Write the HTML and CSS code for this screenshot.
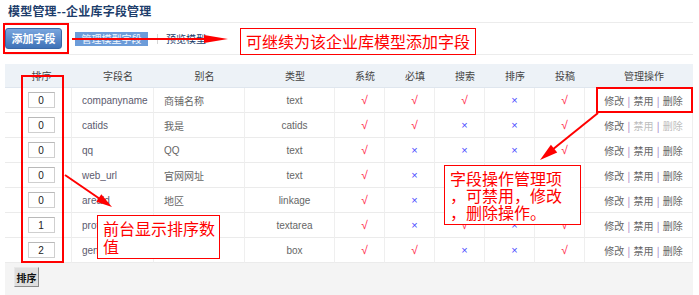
FILE: index.html
```html
<!DOCTYPE html>
<html lang="zh-CN">
<head>
<meta charset="utf-8">
<title>模型管理--企业库字段管理</title>
<link rel="stylesheet" href="styles.css">
</head>
<body>
<div class="page">
  <h1 class="title">模型管理--企业库字段管理</h1>
  <div class="tabs">
    <a class="btn-primary">添加字段</a>
    <a class="btn-tab">管理模型字段</a>
    <span class="sep"></span>
    <a class="link">预览模型</a>
  </div>
  <div class="panel">
    <table class="grid">
      <colgroup>
        <col class="c-sort"><col class="c-field"><col class="c-alias"><col class="c-type">
        <col class="c-flag"><col class="c-flag"><col class="c-flag"><col class="c-flag"><col class="c-flag">
        <col class="c-ops">
      </colgroup>
      <thead>
        <tr><th class="first">排序</th><th>字段名</th><th>别名</th><th>类型</th><th>系统</th><th>必填</th><th>搜索</th><th>排序</th><th>投稿</th><th>管理操作</th></tr>
      </thead>
      <tbody>
        <tr><td class="first"><input class="num" value="0"></td><td class="left fname">companyname</td><td class="left">商铺名称</td><td>text</td><td><span class="yes">√</span></td><td><span class="yes">√</span></td><td><span class="yes">√</span></td><td><span class="no">×</span></td><td><span class="yes">√</span></td><td class="ops">修改 <i>|</i> 禁用 <i>|</i> 删除</td></tr>
        <tr><td class="first"><input class="num" value="0"></td><td class="left fname">catids</td><td class="left">我是</td><td>catids</td><td><span class="yes">√</span></td><td><span class="yes">√</span></td><td><span class="no">×</span></td><td><span class="no">×</span></td><td><span class="yes">√</span></td><td class="ops">修改 <i>|</i> <span class="off">禁用</span> <i>|</i> <span class="off">删除</span></td></tr>
        <tr><td class="first"><input class="num" value="0"></td><td class="left fname">qq</td><td class="left">QQ</td><td>text</td><td><span class="yes">√</span></td><td><span class="no">×</span></td><td><span class="no">×</span></td><td><span class="no">×</span></td><td><span class="yes">√</span></td><td class="ops">修改 <i>|</i> 禁用 <i>|</i> 删除</td></tr>
        <tr><td class="first"><input class="num" value="0"></td><td class="left fname">web_url</td><td class="left">官网网址</td><td>text</td><td><span class="yes">√</span></td><td><span class="no">×</span></td><td><span class="no">×</span></td><td><span class="no">×</span></td><td><span class="yes">√</span></td><td class="ops">修改 <i>|</i> 禁用 <i>|</i> 删除</td></tr>
        <tr><td class="first"><input class="num" value="0"></td><td class="left fname">areaid</td><td class="left">地区</td><td>linkage</td><td><span class="yes">√</span></td><td><span class="no">×</span></td><td><span class="no">×</span></td><td><span class="no">×</span></td><td><span class="yes">√</span></td><td class="ops">修改 <i>|</i> 禁用 <i>|</i> 删除</td></tr>
        <tr><td class="first"><input class="num" value="1"></td><td class="left fname">profile</td><td class="left">公司介绍</td><td>textarea</td><td><span class="yes">√</span></td><td><span class="no">×</span></td><td><span class="yes">√</span></td><td><span class="no">×</span></td><td><span class="yes">√</span></td><td class="ops">修改 <i>|</i> 禁用 <i>|</i> 删除</td></tr>
        <tr><td class="first"><input class="num" value="2"></td><td class="left fname">genre</td><td class="left">经营模式</td><td>box</td><td><span class="yes">√</span></td><td><span class="yes">√</span></td><td><span class="no">×</span></td><td><span class="no">×</span></td><td><span class="yes">√</span></td><td class="ops">修改 <i>|</i> 禁用 <i>|</i> 删除</td></tr>
      </tbody>
    </table>
    <div class="footer"><button class="btn-sort">排序</button></div>
  </div>
</div>

<div class="mark box-btn"></div>
<div class="mark box-col"></div>
<div class="mark box-ops"></div>
<div class="note note-add">可继续为该企业库模型添加字段</div>
<div class="note note-sort">前台显示排序数<br>值</div>
<div class="note note-ops">字段操作管理项<br>，可禁用，修改<br>，删除操作。</div>

<svg class="arrows" width="699" height="295" viewBox="0 0 699 295">
  <line x1="72" y1="39" x2="210" y2="39" stroke="#ff0000" stroke-width="2"/>
  <polygon points="204,35 228,39 204,43" fill="#ff0000"/>
  <line x1="598" y1="113" x2="552" y2="150" stroke="#ff0000" stroke-width="2"/>
  <polygon points="540,160 557.2,152.6 550.9,144.8" fill="#ff0000"/>
  <line x1="65" y1="175" x2="100" y2="199" stroke="#ff0000" stroke-width="2"/>
  <polygon points="112,207 96.3,201.7 101.3,194.3" fill="#ff0000"/>
</svg>
</body>
</html>
```
FILE: styles.css
```css
* { box-sizing: border-box; }
html, body { margin: 0; padding: 0; background: #fff; }
body {
  position: relative;
  width: 699px;
  height: 295px;
  overflow: hidden;
  font-family: "Liberation Sans", "Noto Sans CJK SC", sans-serif;
  font-size: 10px;
  color: #666;
}
.page { padding: 0 6px 0 5px; }

.title {
  margin: 0 0 0 3px;
  height: 22px;
  line-height: 22px;
  font-family: "Noto Sans CJK SC", sans-serif;
  font-size: 12px;
  font-weight: bold;
  color: #1d3d6b;
  letter-spacing: 0.2px;
}

.tabs {
  height: 33px;
  border-top: 1px solid #ececec;
  border-bottom: 1px solid #ececec;
  display: flex;
  align-items: center;
}
.btn-primary {
  width: 57px;
  height: 21px;
  line-height: 19px;
  text-align: center;
  border: 1px solid #3a67a6;
  border-radius: 3px;
  background: linear-gradient(#79a6de, #3f72b8);
  color: #fff;
  font-family: "Noto Sans CJK SC", sans-serif;
  font-size: 11px;
  font-weight: bold;
}
.btn-tab {
  margin-left: 13px;
  width: 73px;
  height: 14px;
  line-height: 14px;
  text-align: center;
  background: #6c9cd9;
  color: #f4f8fe;
  font-family: "Noto Sans CJK SC", sans-serif;
  font-size: 10px;
}
.sep {
  margin-left: 9px;
  width: 1px;
  height: 10px;
  background: #d6d6d6;
}
.link {
  margin-left: 8px;
  color: #1d3d6b;
  font-family: "Noto Sans CJK SC", sans-serif;
  font-size: 10px;
}

.panel {
  margin-top: 9px;
  width: 688px;
  background: #f4f4f4;
}
.grid {
  width: 688px;
  table-layout: fixed;
  border-collapse: separate;
  border-spacing: 0;
}
.c-sort { width: 67px; }
.c-field { width: 82px; }
.c-alias { width: 91px; }
.c-type { width: 90px; }
.c-flag { width: 50px; }
.c-ops { width: 108px; }

.grid th {
  height: 24px;
  padding: 0 0 0 10px;
  background: #edf2f7;
  border-bottom: 1px solid #dfe6ee;
  font-weight: normal;
  color: #444;
  text-align: center;
  font-family: "Noto Sans CJK SC", sans-serif;
}
.grid td {
  height: 25px;
  padding: 0 0 0 10px;
  background: #fff;
  border-bottom: 1px solid #ebebeb;
  border-right: 1px solid #efefef;
  text-align: center;
  white-space: nowrap;
  overflow: hidden;
}
.grid .first { padding-left: 6px; }
.grid td.left { text-align: left; }
.fname { color: #5c5a6e; }

.num {
  width: 27px;
  height: 16px;
  padding: 0;
  border: 1px solid #cfcfcf;
  border-top-color: #b9b9b9;
  font-family: "Liberation Sans", sans-serif;
  font-size: 10px;
  color: #222;
  text-align: center;
  vertical-align: middle;
}
.yes { color: #ff2a4a; font-size: 12px; }
.no { color: #4a4aff; font-size: 11px; }

.ops {
  font-family: "Noto Sans CJK SC", sans-serif;
  color: #666;
  word-spacing: 1px;
}
.ops i { font-style: normal; color: #9a6cc0; }
.ops .off { color: #bdbdbd; }

.footer {
  height: 33px;
  padding: 4px 0 0 9px;
}
.btn-sort {
  width: 25px;
  height: 20px;
  padding: 0;
  border: 1px solid;
  border-color: #e8e8e8 #8a8a8a #8a8a8a #e8e8e8;
  background: #dedede;
  font-family: "Noto Sans CJK SC", sans-serif;
  font-size: 10px;
  font-weight: bold;
  color: #111;
}

.mark, .note {
  position: absolute;
  border: 1px solid #ff0000;
}
.mark { border-width: 2px; }
.box-btn { left: 3px; top: 23px; width: 66px; height: 31px; }
.box-col { left: 21px; top: 75px; width: 43px; height: 188px; }
.box-ops { left: 596px; top: 87px; width: 97px; height: 26px; }

.note {
  background: #fff;
  color: #ff0000;
  font-family: "Noto Sans CJK SC", sans-serif;
  font-size: 16px;
  white-space: nowrap;
}
.note-add { left: 240px; top: 28px; width: 236px; height: 27px; line-height: 24px; padding-left: 5px; }
.note-sort { left: 97px; top: 215px; width: 123px; height: 44px; line-height: 18px; padding: 3px 0 0 5px; }
.note-ops { left: 444px; top: 165px; width: 137px; height: 60px; line-height: 17px; padding: 4px 0 0 5px; }

.arrows { position: absolute; left: 0; top: 0; pointer-events: none; }
```
